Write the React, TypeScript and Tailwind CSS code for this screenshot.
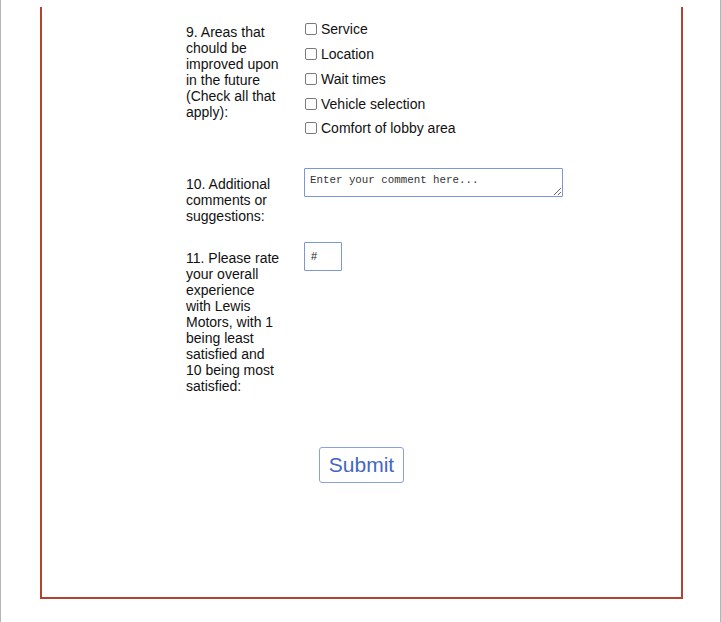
import React from "react";

const areas = ["Service", "Location", "Wait times", "Vehicle selection", "Comfort of lobby area"];

export default function App() {
  return (
    <div className="w-[721px] h-[622px] overflow-hidden bg-white border-x border-[#b5b5b5] font-['Liberation_Sans',Arial,sans-serif] text-[14px] leading-[16px] text-[#111]">
      <div className="ml-[39px] mt-[7px] w-[643px] h-[592px] border-x-2 border-b-2 border-[#b2432f]">
        <div className="pl-[144px] pt-[10px]">
          {/* question 9 */}
          <div className="flex items-start gap-[22px]">
            <div className="w-[96px] mt-[7px]">
              9. Areas that chould be improved upon in the future (Check all that apply):
            </div>
            <div className="flex flex-col">
              {areas.map((a) => (
                <label key={a} className="flex items-center h-[24.75px] gap-[4px] pl-px">
                  <input
                    type="checkbox"
                    className="appearance-none m-0 w-[12px] h-[12px] border border-[#7a7a7a] rounded-[2px] bg-white"
                  />
                  <span>{a}</span>
                </label>
              ))}
            </div>
          </div>

          {/* question 10 */}
          <div className="flex items-start gap-[22px] mt-[27px]">
            <div className="w-[96px] mt-[8px]">10. Additional comments or suggestions:</div>
            <textarea
              placeholder="Enter your comment here..."
              className="w-[259px] h-[29px] border border-[#7b97d6] rounded-[1px] px-[5px] pt-[5px] pb-0 font-['Liberation_Mono',monospace] text-[10.8px] leading-[13px] placeholder:text-[#333] outline-none"
            />
          </div>

          {/* question 11 */}
          <div className="flex items-start gap-[22px] mt-[18px]">
            <div className="w-[96px] mt-[8px]">
              11. Please rate your overall experience with Lewis Motors, with 1 being least satisfied and 10 being most satisfied:
            </div>
            <input
              type="text"
              placeholder="#"
              className="w-[38px] h-[29px] border border-[#7b97d6] rounded-[1px] px-[6px] pb-[1px] text-[11px] placeholder:text-[#222] outline-none"
            />
          </div>
        </div>

        <div className="flex justify-center mt-[53px]">
          <button className="w-[85px] h-[36px] border border-[#8aa2db] rounded-[3px] bg-white text-[21px] leading-none text-[#4566c4] pb-[1px]">
            Submit
          </button>
        </div>
      </div>
    </div>
  );
}
